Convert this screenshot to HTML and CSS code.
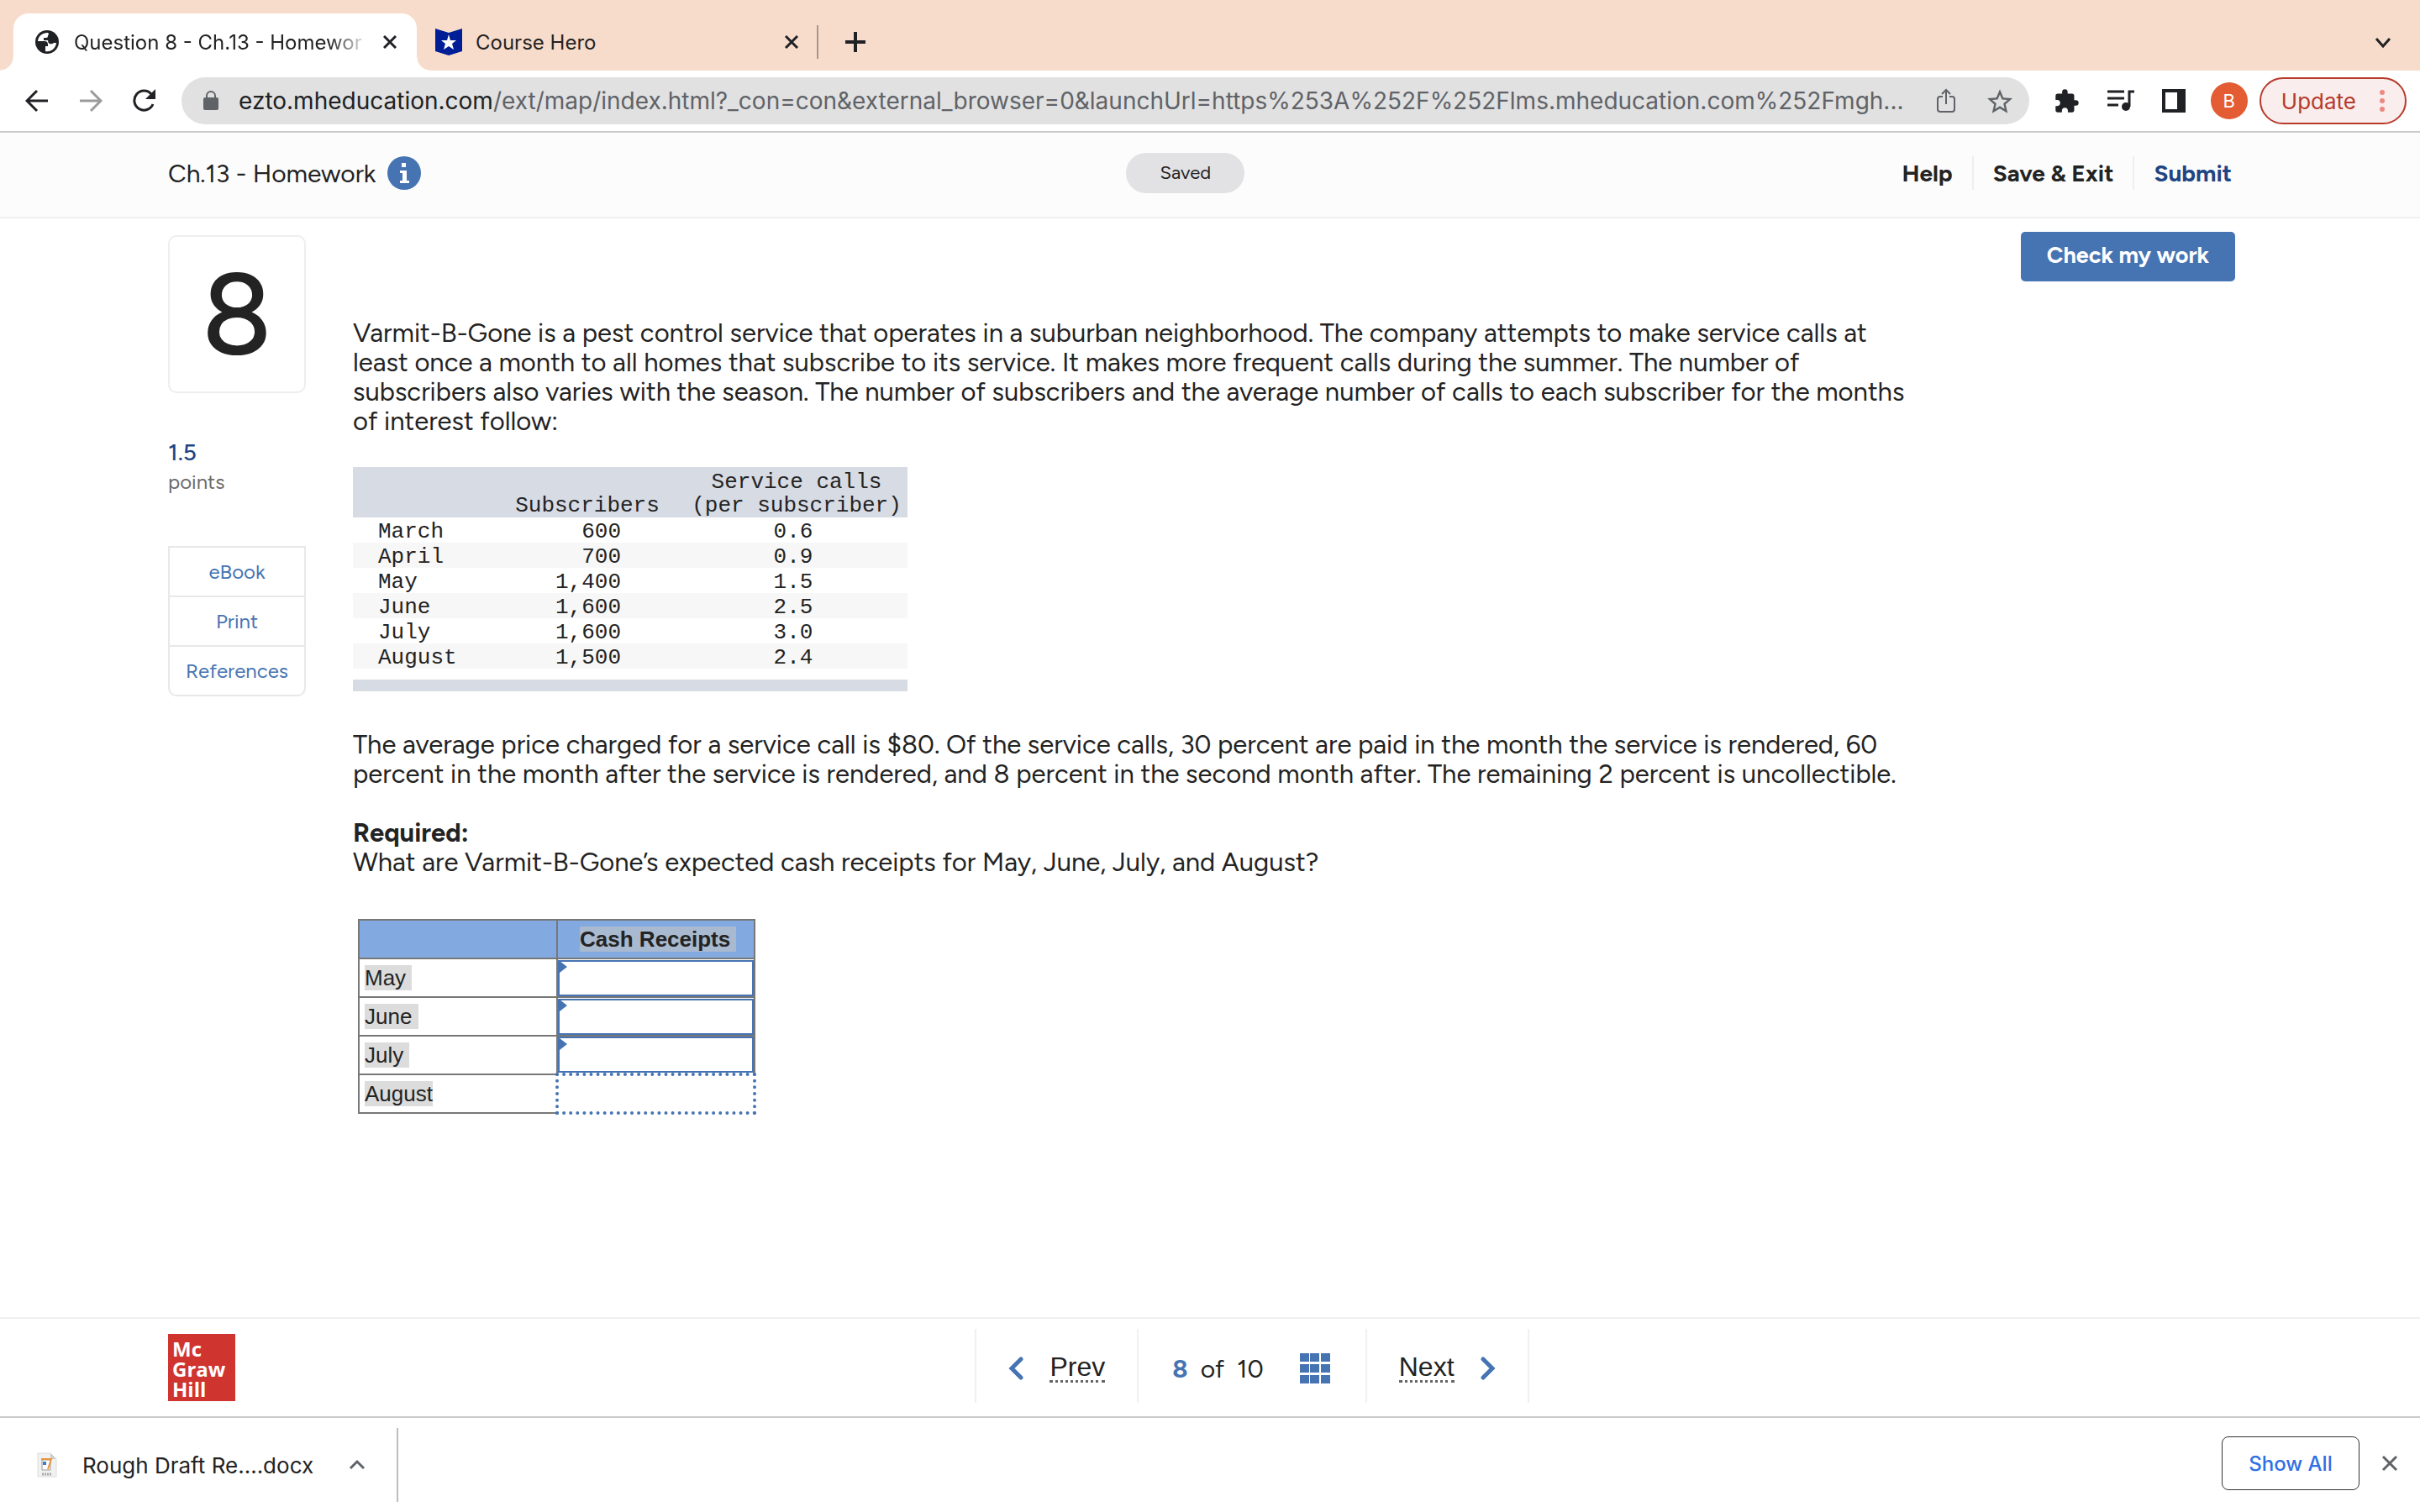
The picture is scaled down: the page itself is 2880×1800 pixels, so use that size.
FILE: index.html
```
<!DOCTYPE html>
<html lang="en">
<head>
    <meta charset="UTF-8">
    <meta name="viewport" content="width=device-width, initial-scale=1.0">
    <title>Question 8 - Ch.13 - Homework</title>
    <link rel="stylesheet" href="styles.css">
</head>
<body>
    <div class="tab-strip">
        <div class="tab tab-active">
            <svg class="tab-icon" viewBox="0 0 28 28"><circle cx="14" cy="14" r="14" fill="#202124"/><path d="M15 3A11 11 0 0 0 3 13h8q4 0 4 4v2h-3v6A11 11 0 0 0 25 15h-3q-2 2-5 1-2-1-2-4h-5V9h3q2 0 2-2V6q2-1 0-3z" fill="#fff"/></svg>
            <span class="tab-title fade">Question 8 - Ch.13 - Homewor</span>
            <button class="icon-btn" aria-label="Close tab"><svg width="16" height="16" viewBox="0 0 16 16"><path d="M1 1l14 14M15 1L1 15" stroke="#202124" stroke-width="3"/></svg></button>
        </div>
        <div class="tab tab-second">
            <svg class="tab-icon hero" viewBox="0 0 32 32"><path d="M0 0l16 5L32 0v27l-16 5-16-5z" fill="#001e96"/><path d="M16 7l2 7h7l-5 4 2 7-6-4-6 4 2-7-5-4h7z" fill="#fff"/></svg>
            <span class="tab-title">Course Hero</span>
            <button class="icon-btn" aria-label="Close tab"><svg width="16" height="16" viewBox="0 0 16 16"><path d="M1 1l14 14M15 1L1 15" stroke="#202124" stroke-width="3"/></svg></button>
        </div>
        <button class="icon-btn new-tab" aria-label="New tab"><svg width="24" height="24" viewBox="0 0 24 24"><path d="M12 0v24M0 12h24" stroke="#202124" stroke-width="4"/></svg></button>
        <button class="icon-btn tab-search" aria-label="Search tabs"><svg width="20" height="14" viewBox="0 0 20 14"><path d="M2 2l8 9 8-9" fill="none" stroke="#202124" stroke-width="3"/></svg></button>
    </div>

    <div class="toolbar">
        <div class="nav-buttons">
            <button class="icon-btn" aria-label="Back"><svg width="28" height="28" viewBox="0 0 28 28"><path d="M27 14H3M14 2L2 14l12 12" fill="none" stroke="#202124" stroke-width="3"/></svg></button>
            <button class="icon-btn" aria-label="Forward"><svg width="28" height="28" viewBox="0 0 28 28"><path d="M1 14h24M14 2l12 12-12 12" fill="none" stroke="#9b9b9b" stroke-width="3"/></svg></button>
            <button class="icon-btn" aria-label="Reload"><svg width="28" height="28" viewBox="0 0 28 28"><path d="M24 18A11.500 11.500 0 1 1 22 6" fill="none" stroke="#202124" stroke-width="3"/><path d="M27 0v12H15z" fill="#202124"/></svg></button>
        </div>
        <div class="address">
            <svg width="18" height="24" viewBox="0 0 18 24"><path d="M4 9V6a5 5 0 0 1 10 0v3" fill="none" stroke="#5f6368" stroke-width="2"/><rect y="8" width="18" height="15" rx="2" fill="#5f6368"/></svg>
            <span class="url"><b>ezto.mheducation.com</b>/ext/map/index.html?_con=con&amp;external_browser=0&amp;launchUrl=https%253A%252F%252Flms.mheducation.com%252Fmgh...</span>
            <button class="icon-btn" aria-label="Share"><svg width="22" height="30" viewBox="0 0 22 30"><path d="M7 10H4q-3 0-3 3v12q0 3 3 3h14q3 0 3-3V13q0-3-3-3h-3M11 19V3M6 7l5-5 5 5" fill="none" stroke="#5f6368" stroke-width="2"/></svg></button>
            <button class="icon-btn" aria-label="Bookmark"><svg width="30" height="29" viewBox="2 2 20 19"><path d="M22 9.240l-7.190-.620L12 2 9.190 8.630 2 9.240l5.460 4.730L5.820 21 12 17.270 18.180 21l-1.630-7.030zM12 15.400l-3.760 2.270 1-4.280-3.320-2.880 4.380-.380L12 6.100l1.710 4.040 4.380.380-3.320 2.880 1 4.280z" fill="#5f6368"/></svg></button>
        </div>
        <div class="actions">
            <button class="icon-btn" aria-label="Extensions"><svg width="30" height="30" viewBox="1 0 23 23"><path d="M20.500 11H19V7a2 2 0 0 0-2-2h-4V3.500a2.500 2.500 0 0 0-5 0V5H4a2 2 0 0 0-2 2v3.800h1.500a2.700 2.700 0 0 1 0 5.400H2V20a2 2 0 0 0 2 2h3.800v-1.500a2.700 2.700 0 0 1 5.400 0V22H17a2 2 0 0 0 2-2v-4h1.500a2.500 2.500 0 0 0 0-5z" fill="#202124"/></svg></button>
            <button class="icon-btn" aria-label="Media"><svg width="32" height="26" viewBox="0 0 32 26"><path d="M0 2h20M0 10h20M0 18h13" stroke="#202124" stroke-width="3"/><path d="M26 20V2h6" fill="none" stroke="#202124" stroke-width="3"/><circle cx="22" cy="20" r="5" fill="#202124"/></svg></button>
            <button class="icon-btn" aria-label="Side panel"><svg width="28" height="28" viewBox="0 0 28 28"><path d="M0 0h28v28H0zM4 4v20h14V4z" fill="#202124" fill-rule="evenodd"/></svg></button>
        </div>
        <div class="account">
            <button class="avatar">B</button>
            <button class="update">Update <svg width="6" height="28" viewBox="0 0 6 28"><g fill="#ea8a80"><circle cx="3" cy="4" r="3"/><circle cx="3" cy="14" r="3"/><circle cx="3" cy="24" r="3"/></g></svg></button>
        </div>
    </div>

    <header class="course-bar">
        <div class="course-name">Ch.13 - Homework
            <svg width="40" height="40" viewBox="0 0 40 40"><circle cx="20" cy="20" r="20" fill="#4674b3"/><path d="M17 8h5v5h-5zM15 17h8v12h3v3H15v-3h3v-9h-3z" fill="#fff"/></svg>
        </div>
        <span class="saved">Saved</span>
        <nav class="course-links">
            <a href="#">Help</a>
            <a href="#">Save &amp; Exit</a>
            <a href="#" class="submit">Submit</a>
        </nav>
    </header>

    <main class="content">
        <aside class="side">
            <div class="number">8</div>
            <div class="points"><strong>1.5</strong>points</div>
            <nav class="tools">
                <a href="#">eBook</a>
                <a href="#">Print</a>
                <a href="#">References</a>
            </nav>
        </aside>
        <section class="question">
            <button class="check">Check my work</button>
            <p>Varmit-B-Gone is a pest control service that operates in a suburban neighborhood. The company attempts to make service calls at least once a month to all homes that subscribe to its service. It makes more frequent calls during the summer. The number of subscribers also varies with the season. The number of subscribers and the average number of calls to each subscriber for the months of interest follow:</p>
            <table class="data">
                <thead>
                    <tr><th class="month"></th><th class="subscribers">Subscribers</th><th>Service calls<br>(per subscriber)</th></tr>
                </thead>
                <tbody>
                    <tr><td>March</td><td>600</td><td>0.6</td></tr>
                    <tr><td>April</td><td>700</td><td>0.9</td></tr>
                    <tr><td>May</td><td>1,400</td><td>1.5</td></tr>
                    <tr><td>June</td><td>1,600</td><td>2.5</td></tr>
                    <tr><td>July</td><td>1,600</td><td>3.0</td></tr>
                    <tr><td>August</td><td>1,500</td><td>2.4</td></tr>
                </tbody>
            </table>
            <p>The average price charged for a service call is $80. Of the service calls, 30 percent are paid in the month the service is rendered, 60 percent in the month after the service is rendered, and 8 percent in the second month after. The remaining 2 percent is uncollectible.</p>
            <p class="required"><strong>Required:</strong><br>What are Varmit-B-Gone’s expected cash receipts for May, June, July, and August?</p>
            <table class="answer">
                <thead>
                    <tr><th></th><th><span>Cash Receipts&nbsp;</span></th></tr>
                </thead>
                <tbody>
                    <tr><td><label for="may">May&nbsp;</label></td><td class="entry"><input type="text" id="may"></td></tr>
                    <tr><td><label for="june">June&nbsp;</label></td><td class="entry"><input type="text" id="june"></td></tr>
                    <tr><td><label for="july">July&nbsp;</label></td><td class="entry"><input type="text" id="july"></td></tr>
                    <tr><td><label for="august">August</label></td><td class="entry current"><input type="text" id="august"></td></tr>
                </tbody>
            </table>
        </section>
    </main>

    <footer class="pager-bar">
        <div class="logo">Mc<br>Graw<br>Hill</div>
        <nav class="pager">
            <a href="#"><svg width="18" height="28" viewBox="0 0 18 28"><path d="M15 3L4 14l11 11" fill="none" stroke="#4674b3" stroke-width="5" stroke-linecap="round"/></svg><span>Prev</span></a>
            <div class="count">
                <b>8</b><span>of</span><span>10</span>
                <svg width="36" height="36" viewBox="0 0 36 36"><path d="M0 0h11v10H0zM12 0h11v10H12zM25 0h11v10H25zM0 13h11v10H0zM12 13h11v10H12zM25 13h11v10H25zM0 26h11v10H0zM12 26h11v10H12zM25 26h11v10H25z" fill="#4674b3"/></svg>
            </div>
            <a href="#"><span>Next</span><svg width="18" height="28" viewBox="0 0 18 28"><path d="M3 3l11 11L3 25" fill="none" stroke="#4674b3" stroke-width="5" stroke-linecap="round"/></svg></a>
        </nav>
    </footer>

    <div class="downloads">
        <div class="file">
            <svg width="24" height="30" viewBox="0 0 24 30"><path d="M1 1h15l7 7v21H1z" fill="#f1f1f1" stroke="#ddd"/><path d="M16 1v7h7z" fill="#ccc"/><path d="M6 9h10v12H6z" fill="#fff" stroke="#999"/><path d="M7 11h4v4H7z" fill="#3b7bd0"/><path d="M5 8h12l-4 12" fill="none" stroke="#e8963a" stroke-width="2"/><path d="M6 26h12" stroke="#aaa" stroke-width="3" stroke-dasharray="2 1"/></svg>
            <span>Rough Draft Re....docx</span>
            <button class="icon-btn" aria-label="File options"><svg width="20" height="14" viewBox="0 0 20 14"><path d="M2 11l8-8 8 8" fill="none" stroke="#5f6368" stroke-width="3"/></svg></button>
        </div>
        <div class="shelf-buttons">
            <button class="show-all">Show All</button>
            <button class="icon-btn" aria-label="Close downloads"><svg width="20" height="20" viewBox="0 0 20 20"><path d="M2 2l16 16M18 2L2 18" stroke="#5f6368" stroke-width="3"/></svg></button>
        </div>
    </div>
</body>
</html>
```
FILE: styles.css
```
* {
    box-sizing: border-box;
}

body {
    margin: 0;
    min-height: 100vh;
    display: flex;
    flex-direction: column;
    background-color: #fff;
    color: #232323;
    font-family: Figtree, Lato, sans-serif;
    font-size: 31px;
}

a {
    color: inherit;
    text-decoration: none;
}

button {
    font-family: inherit;
    cursor: pointer;
}

svg {
    display: block;
    flex-shrink: 0;
}

.icon-btn {
    display: flex;
    border: none;
    background: none;
    padding: 0;
}

/* browser tabs */
.tab-strip {
    display: flex;
    align-items: flex-end;
    height: 84px;
    padding-left: 16px;
    background-color: #f7dccb;
    font-family: Inter, sans-serif;
    font-size: 24px;
}

.tab {
    position: relative;
    display: flex;
    align-items: center;
    height: 68px;
    padding: 0 24px 0 26px;
}

.tab-active {
    width: 480px;
    background-color: #fff;
    border-radius: 18px 18px 0 0;
}

.tab-active::before,
.tab-active::after {
    content: "";
    position: absolute;
    bottom: 0;
    width: 16px;
    height: 16px;
}

.tab-active::before {
    left: -16px;
    background: radial-gradient(circle at 0 0, transparent 15px, #fff 16px);
}

.tab-active::after {
    right: -16px;
    background: radial-gradient(circle at 100% 0, transparent 15px, #fff 16px);
}

.tab-second {
    width: 478px;
    padding-left: 22px;
}

.tab-second::after {
    content: "";
    position: absolute;
    right: 0;
    top: 14px;
    width: 2px;
    height: 40px;
    background-color: #a8958b;
}

.tab-icon {
    width: 28px;
    height: 28px;
}

.hero {
    width: 32px;
    height: 32px;
}

.tab-title {
    flex: 1;
    margin: 0 16px;
    white-space: nowrap;
}

.fade {
    margin-left: 18px;
    mask-image: linear-gradient(to right, #000 86%, transparent);
}

.new-tab {
    margin: 0 auto 22px 32px;
}

.tab-search {
    margin: 0 34px 26px 0;
}

/* address bar */
.toolbar {
    display: flex;
    align-items: center;
    gap: 30px;
    height: 74px;
    padding: 0 16px 0 30px;
    border-bottom: 2px solid #cacbcd;
    font-family: Inter, sans-serif;
}

.nav-buttons,
.actions,
.account,
.shelf-buttons {
    display: flex;
    align-items: center;
}

.nav-buttons {
    gap: 36px;
}

.actions {
    gap: 33px;
}

.account {
    gap: 14px;
}

.address {
    flex: 1;
    min-width: 0;
    display: flex;
    align-items: center;
    gap: 38px;
    height: 56px;
    padding: 0 20px 0 26px;
    border-radius: 28px;
    background-color: #e1e1e1;
    color: #5f6368;
    font-size: 28px;
}

.url {
    flex: 1;
    margin-left: -14px;
    margin-right: -14px;
    white-space: nowrap;
}

.url b {
    color: #202124;
    font-weight: 400;
}

.avatar {
    width: 44px;
    height: 44px;
    border: none;
    border-radius: 50%;
    background-color: #e35c33;
    color: #fff;
    font-size: 22px;
}

.update {
    display: flex;
    align-items: center;
    gap: 28px;
    height: 56px;
    padding: 0 24px;
    border: 2px solid #b73a2b;
    border-radius: 28px;
    background-color: #f9eded;
    color: #b73a2b;
    font-size: 26px;
}

/* assignment header */
.course-bar {
    display: grid;
    grid-template-columns: 33fr auto 34fr;
    align-items: center;
    height: 102px;
    padding: 0 224px 4px 200px;
    border-bottom: 2px solid #f0f0f0;
    background-color: #fcfcfc;
}

.course-name {
    display: flex;
    align-items: center;
    gap: 14px;
    font-size: 30px;
}

.saved {
    padding: 0 40px;
    border-radius: 24px;
    background-color: #e2e1e3;
    font-size: 22px;
    line-height: 48px;
}

.course-links {
    display: flex;
    justify-content: flex-end;
    font-size: 28px;
    font-weight: 700;
    line-height: 40px;
}

.course-links a {
    padding: 0 23px;
    border-left: 2px solid #eee;
}

.course-links a:first-child {
    border-left: none;
}

.course-links a:last-child {
    padding-right: 0;
    color: #1f4583;
}

.content {
    flex: 1;
    display: flex;
    gap: 56px;
    padding: 16px 220px 0 200px;
}

.side {
    width: 164px;
    flex-shrink: 0;
    padding-top: 4px;
    font-size: 24px;
}

.number {
    height: 188px;
    border: 2px solid #eee;
    border-radius: 10px;
    font-size: 136px;
    font-weight: 500;
    line-height: 184px;
    text-align: center;
}

.points {
    margin: 52px 0 58px;
    color: #6b6b6b;
    line-height: 36px;
}

.points strong {
    display: block;
    color: #1f4583;
    font-size: 28px;
    font-weight: 500;
}

.tools {
    border: 2px solid #e8e8e8;
    border-radius: 0 0 10px 10px;
    color: #4674b3;
    text-align: center;
}

.tools a {
    display: block;
    line-height: 57px;
}

.tools a + a {
    border-top: 2px solid #e8e8e8;
}

.question {
    flex: 1;
    line-height: 35px;
}

.question p {
    margin: 0;
    max-width: 1860px;
}

.question .required {
    margin-top: 35px;
}

.check {
    display: block;
    margin: 0 0 44px auto;
    width: 255px;
    height: 59px;
    padding: 0 0 4px;
    border: none;
    border-radius: 5px;
    background-color: #4674b3;
    color: #fff;
    font-size: 27px;
    font-weight: 700;
}

/* subscriber figures */
.data {
    margin: 37px 0 46px;
    width: 660px;
    padding-bottom: 13px;
    border-spacing: 0;
    border-bottom: 14px solid #d7dbe4;
    font-family: "Liberation Mono", monospace;
    font-size: 26px;
    line-height: 30px;
    table-layout: fixed;
}

.data th {
    padding: 4px 0 0;
    background-color: #d7dbe4;
    font-weight: 400;
    line-height: 28px;
    vertical-align: bottom;
}

.data td {
    padding: 4px 0 0;
    line-height: 26px;
}

.month {
    width: 162px;
}

.subscribers {
    width: 234px;
}

.data td:first-child {
    padding-left: 30px;
}

.data td:nth-child(2) {
    padding-right: 77px;
    text-align: right;
}

.data td:nth-child(3) {
    padding-right: 8px;
    text-align: center;
}

.data tbody tr:nth-child(even) {
    background-color: #f7f7f7;
}

/* answer grid */
.answer {
    margin: 50px 0 0 6px;
    width: 474px;
    border-collapse: collapse;
    font-family: "Liberation Sans", sans-serif;
    font-size: 26px;
    line-height: 30px;
    table-layout: fixed;
}

.answer th,
.answer td {
    height: 46px;
    padding: 0 6px;
    border: 2px solid #777;
}

.answer th {
    padding: 0 0 0 6px;
    background-color: #82aae0;
}

.answer th span {
    background-color: #a9b9cf;
}

.answer label {
    background-color: #dcdcdc;
}

.answer .entry {
    position: relative;
    padding: 0;
}

.entry::before {
    content: "";
    position: absolute;
    top: 2px;
    left: 2px;
    border-left: 9px solid #4674b3;
    border-top: 7px solid transparent;
    border-bottom: 7px solid transparent;
}

.entry input {
    display: block;
    width: 100%;
    height: 43px;
    padding: 0 12px;
    border: 2px solid #4674b3;
    background: none;
    outline: none;
    font: inherit;
}

.answer .current {
    border: 4px dotted #4674b3;
}

.current::before {
    display: none;
}

.current input {
    height: 40px;
    border: none;
}

/* question pager */
.pager-bar {
    display: flex;
    align-items: center;
    height: 118px;
    padding: 0 180px 0 200px;
    border-top: 2px solid #f0f0f0;
}

.logo {
    width: 80px;
    height: 80px;
    margin-right: auto;
    padding: 6px 5px;
    background-color: #d0342f;
    color: #fff;
    font-family: "Open Sans", sans-serif;
    font-size: 24px;
    font-weight: 700;
    line-height: 24px;
}

.pager {
    display: flex;
    height: 88px;
    margin-right: auto;
    margin-bottom: 4px;
    border-right: 2px solid #f0f0f0;
}

.pager a,
.count {
    display: flex;
    align-items: center;
    padding: 6px 38px 0;
    border-left: 2px solid #f0f0f0;
}

.pager a {
    gap: 31px;
    font-family: "Liberation Sans", sans-serif;
    font-size: 32px;
}

.pager a span {
    border-bottom: 3px dotted #666;
    line-height: 31px;
}

.count {
    gap: 15px;
    padding: 6px 42px 0 40px;
    font-size: 30px;
}

.count b {
    color: #4674b3;
}

.count svg {
    margin-left: 28px;
}

/* downloads shelf */
.downloads {
    display: flex;
    align-items: center;
    height: 114px;
    padding-right: 26px;
    border-top: 2px solid #cacbcd;
    font-family: Inter, sans-serif;
    font-size: 26px;
}

.file {
    display: flex;
    align-items: center;
    gap: 30px;
    width: 474px;
    height: 88px;
    margin-right: auto;
    padding-left: 44px;
    border-right: 2px solid #bdbdbd;
}

.file .icon-btn {
    margin-left: 12px;
}

.shelf-buttons {
    gap: 26px;
    padding-bottom: 4px;
}

.show-all {
    width: 164px;
    height: 64px;
    border: 1px solid #333;
    border-radius: 8px;
    background-color: #fff;
    color: #2f6fe4;
    font-size: 24px;
    font-weight: 500;
}
```
